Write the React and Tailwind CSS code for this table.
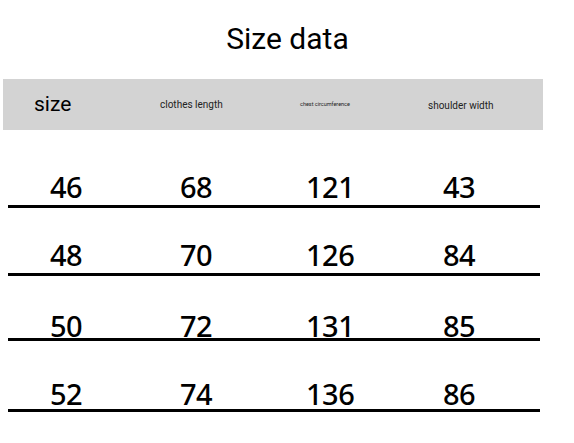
import React from "react";

const rows = [
  { cells: ["46", "68", "121", "43"], h: "h-[78px]", pad: "pb-[4px]" },
  { cells: ["48", "70", "126", "84"], h: "h-[68px]", pad: "pb-[4px]" },
  { cells: ["50", "72", "131", "85"], h: "h-[65px]", pad: "mb-[-2px]" },
  { cells: ["52", "74", "136", "86"], h: "h-[71px]", pad: "pb-[1px]" },
];

const colWidths = ["w-[130px]", "w-[126px]", "w-[137px]", "flex-1"];

const App = () => {
  return (
    <div className="w-[574px] h-[443px] bg-white overflow-hidden text-black">
      {/* Title */}
      <h1 className="mt-[24px] h-[30px] text-center text-[30px] leading-[30px] font-normal font-['Roboto',sans-serif] pl-[1px]">
        Size data
      </h1>

      {/* Header band */}
      <div className="mt-[25px] ml-[3px] w-[540px] h-[51px] bg-[#d3d3d3] flex items-center pl-[31px] font-['Roboto',sans-serif] text-[#222]">
        <div className="w-[126px] text-[21px] leading-none text-black">size</div>
        <div className="w-[140px] text-[10px] leading-none">clothes length</div>
        <div className="w-[128px] text-[5.5px] leading-none">chest circumference</div>
        <div className="flex-1 text-[10px] leading-none pt-[3px]">shoulder width</div>
      </div>

      {/* Data rows */}
      <div className="ml-[8px] w-[532px]">
        {rows.map((row, i) => (
          <div
            key={i}
            className={`${row.h} border-b-[3px] border-black flex items-end`}
          >
            <div className={`flex w-full pl-[42px] ${row.pad}`}>
              {row.cells.map((c, j) => (
                <span
                  key={j}
                  className={`${colWidths[j]} text-[29px] leading-[29px] font-medium tracking-[-0.5px] font-['Noto_Sans',sans-serif]`}
                >
                  {c}
                </span>
              ))}
            </div>
          </div>
        ))}
      </div>
    </div>
  );
};

export default App;
